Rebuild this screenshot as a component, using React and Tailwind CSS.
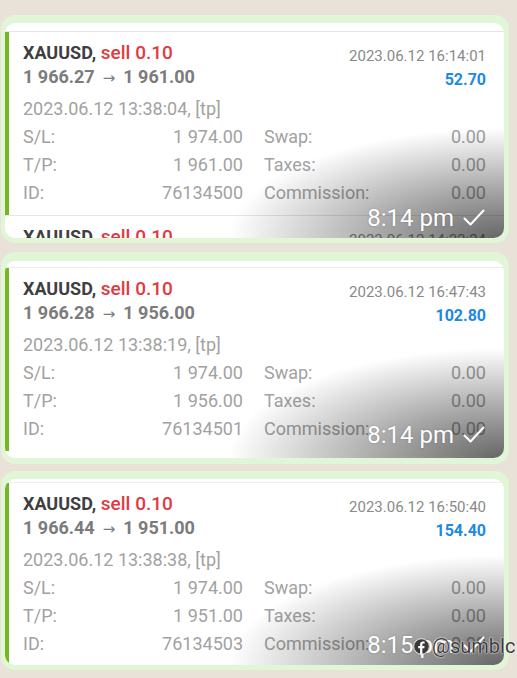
import React from 'react';

const trades = [
  { open: '1 966.27', close: '1 961.00', openTime: '2023.06.12 13:38:04', closeTime: '2023.06.12 16:14:01', profit: '52.70', sl: '1 974.00', tp: '1 961.00', id: '76134500' },
  { open: '1 966.28', close: '1 956.00', openTime: '2023.06.12 13:38:19', closeTime: '2023.06.12 16:47:43', profit: '102.80', sl: '1 974.00', tp: '1 956.00', id: '76134501' },
  { open: '1 966.44', close: '1 951.00', openTime: '2023.06.12 13:38:38', closeTime: '2023.06.12 16:50:40', profit: '154.40', sl: '1 974.00', tp: '1 951.00', id: '76134503' },
];

const Check = () => (
  <svg width="22" height="18" viewBox="0 0 22 18" fill="none" className="inline-block ml-[9px]">
    <path d="M1.5 9.5 L7.5 15.5 L20.5 1.5" stroke="white" strokeWidth="2" strokeLinecap="round" strokeLinejoin="round" />
  </svg>
);

const Row = ({ label, value }) => (
  <div className="flex justify-between">
    <span>{label}</span>
    <span>{value}</span>
  </div>
);

const TradeItem = ({ t, active = true }) => (
  <div className={`border-l-4 pl-[14px] pr-[18px] pt-[9px] pb-[8px] ${active ? 'border-[#78b526]' : 'border-transparent'}`}>
    <div className="flex justify-between">
      <div>
        <div className="text-[18px] leading-6 font-bold text-[#3f3f3f]">
          XAUUSD, <span className="text-[19px] font-medium text-[#e2393f]">sell 0.10</span>
        </div>
        <div className="text-[18px] leading-6 font-bold text-[#7b7b7b]">
          {t.open}
          <span className="mx-[8px] font-['DejaVu_Sans',sans-serif] text-[15px] font-normal text-[#7b7b7b]">→</span>
          {t.close}
        </div>
      </div>
      <div className="text-right pt-[3px]">
        <div className="text-[15px] leading-6 text-[#8a8a8a]">{t.closeTime}</div>
        <div className="text-[16px] leading-6 font-bold text-[#1e88e5]">{t.profit}</div>
      </div>
    </div>
    <div className="mt-[3px] text-[18px] leading-[28px] text-[#a2a2a2]">{t.openTime}, [tp]</div>
    <div className="grid grid-cols-[220px_222px] gap-x-[21px] text-[18px] leading-[28px] text-[#a2a2a2]">
      <Row label="S/L:" value={t.sl} />
      <Row label="Swap:" value="0.00" />
      <Row label="T/P:" value={t.tp} />
      <Row label="Taxes:" value="0.00" />
      <Row label="ID:" value={t.id} />
      <Row label="Commission:" value="0.00" />
    </div>
  </div>
);

const TimeStamp = ({ time, bottom }) => (
  <>
    <div className="absolute inset-0 pointer-events-none bg-[radial-gradient(ellipse_275px_110px_at_100%_100%,rgba(0,0,0,0.6),rgba(0,0,0,0.34)_45%,rgba(0,0,0,0)_100%)]" />
    <div className={`absolute right-[19px] ${bottom} flex items-center text-[24px] leading-6 text-white [text-shadow:0_0_2px_rgba(0,0,0,0.25)]`}>
      {time}
      <Check />
    </div>
  </>
);

const Bubble = ({ className, children }) => (
  <div className={`relative ml-[1px] w-[508px] rounded-[14px] bg-[#e1f6d6] pl-[4px] pr-[5px] ${className}`}>
    {children}
  </div>
);

export default function App() {
  return (
    <div className="w-[517px] h-[678px] overflow-hidden bg-[#e8e2d9] pt-[15px] font-[Roboto,sans-serif]">
      <Bubble className="h-[228px] pt-[8px] pb-[5px]">
        <div className="relative h-full overflow-hidden rounded-[10px] bg-white pt-[8px]">
          <div className="border-t border-[#e6e6e6]">
            <TradeItem t={trades[0]} />
            <div className="border-t border-[#e6e6e6]">
              <TradeItem t={{ ...trades[0], closeTime: '2023.06.12 14:22:24' }} active={false} />
            </div>
          </div>
          <TimeStamp time="8:14 pm" bottom="bottom-[8px]" />
        </div>
      </Bubble>

      <Bubble className="mt-[9px] h-[212px] pt-[9px] pb-[6px]">
        <div className="relative h-full overflow-hidden rounded-[10px] bg-white pt-[6px]">
          <div className="border-t border-[#ececec]">
            <TradeItem t={trades[1]} />
          </div>
          <TimeStamp time="8:14 pm" bottom="bottom-[11px]" />
        </div>
      </Bubble>

      <Bubble className="mt-[7px] h-[199px] pt-[8px] pb-[5px]">
        <div className="relative h-full overflow-hidden rounded-[10px] bg-white pt-[3px]">
          <div className="border-t border-[#f0f0f0]">
            <TradeItem t={trades[2]} />
          </div>
          <TimeStamp time="8:15 pm" bottom="bottom-[8px]" />
        </div>
        <div className="absolute left-[412px] top-[165px] flex items-center text-[20px] leading-5 text-[#3a3a3a] [text-shadow:0_0_2px_#fff,0_0_1px_#fff]">
          <svg width="17" height="17" viewBox="0 0 24 24" className="mr-[2px]">
            <circle cx="12" cy="12" r="11" fill="#3a3a3a" stroke="#fff" strokeWidth="1.2" />
            <path d="M13.2 22.8V14.3h2.7l.4-3.1h-3.1V9.3c0-.9.3-1.5 1.6-1.5h1.6V5c-.3 0-1.3-.1-2.4-.1-2.4 0-4 1.4-4 4.1v2.2H7.3v3.1H10v8.5z" fill="#fff" />
          </svg>
          @sumblc
        </div>
      </Bubble>
    </div>
  );
}
